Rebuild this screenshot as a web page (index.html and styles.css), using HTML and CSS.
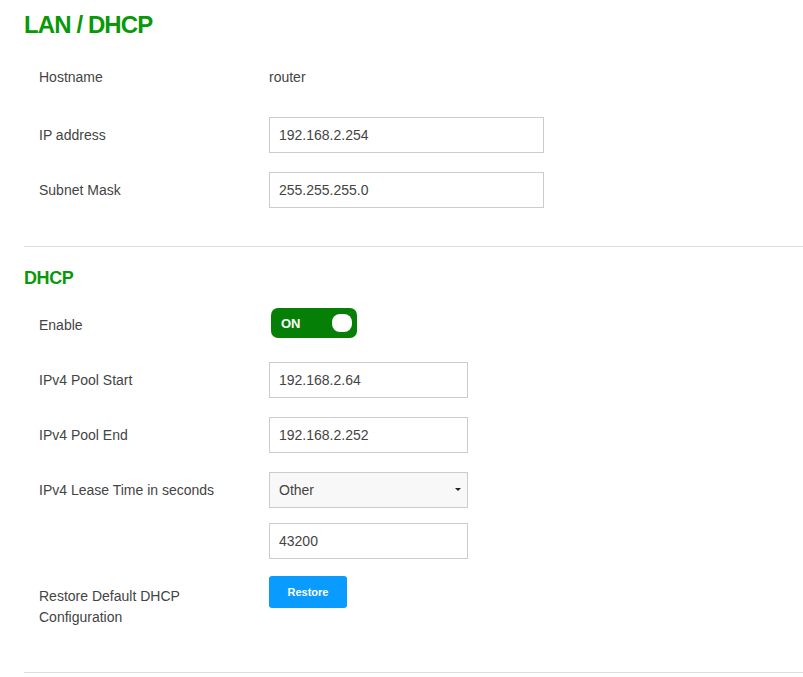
FILE: index.html
```html
<!DOCTYPE html>
<html lang="en">
<head>
  <meta charset="UTF-8">
  <meta name="viewport" content="width=device-width, initial-scale=1.0">
  <link rel="stylesheet" href="styles.css">
</head>
<body>

<div class="page">
  <h1 class="title">LAN / DHCP</h1>

  <div class="row row-host">
    <div class="label">Hostname</div>
    <div class="value">router</div>
  </div>
  <div class="row">
    <div class="label">IP address</div>
    <input class="field wide" type="text" value="192.168.2.254">
  </div>
  <div class="row">
    <div class="label">Subnet Mask</div>
    <input class="field wide" type="text" value="255.255.255.0">
  </div>

  <hr class="sep sep-top">

  <h2 class="subtitle">DHCP</h2>

  <div class="row">
    <div class="label">Enable</div>
    <div class="toggle">
      <span class="toggle-text">ON</span>
      <span class="knob"></span>
    </div>
  </div>
  <div class="row">
    <div class="label">IPv4 Pool Start</div>
    <input class="field" type="text" value="192.168.2.64">
  </div>
  <div class="row">
    <div class="label">IPv4 Pool End</div>
    <input class="field" type="text" value="192.168.2.252">
  </div>
  <div class="row row-tight">
    <div class="label">IPv4 Lease Time in seconds</div>
    <div class="select-wrap">
      <select class="field select">
        <option>Other</option>
      </select>
    </div>
  </div>
  <div class="row row-extra">
    <div class="label"></div>
    <input class="field" type="text" value="43200">
  </div>
  <div class="row row-restore">
    <div class="label label-multi">Restore Default DHCP Configuration</div>
    <button class="btn">Restore</button>
  </div>

  <hr class="sep sep-bottom">
</div>

</body>
</html>
```

FILE: styles.css
```css
body {
  margin: 0;
  font-family: "Liberation Sans", Arial, sans-serif;
  color: #444;
  background: #fff;
}

.page {
  padding-left: 24px;
}

.title {
  margin: 10px 0 20px;
  font-size: 24px;
  line-height: 29px;
  letter-spacing: -0.9px;
  font-weight: bold;
  color: #079907;
}

.subtitle {
  margin: 21px 0 18px;
  font-size: 18px;
  line-height: 21px;
  letter-spacing: -0.4px;
  font-weight: bold;
  color: #079907;
}

.row {
  display: flex;
  align-items: center;
  min-height: 36px;
  margin-bottom: 19px;
}

.row-host {
  margin-bottom: 22px;
}

.row-tight {
  margin-bottom: 15px;
}

.row-extra {
  margin-bottom: 17px;
}

.row-restore {
  align-items: flex-start;
  margin-bottom: 0;
}

.label {
  padding-left: 15px;
  padding-right: 20px;
  box-sizing: border-box;
  flex: 0 0 245px;
  font-size: 14px;
  line-height: 21px;
  color: #444;
}

.label-multi {
  padding-top: 10px;
}

.value {
  font-size: 14px;
  color: #444;
}

.field {
  box-sizing: border-box;
  width: 199px;
  height: 36px;
  padding: 0 9px;
  border: 1px solid #ccc;
  font-family: "Liberation Sans", Arial, sans-serif;
  font-size: 14px;
  color: #444;
  background: #fff;
  outline: none;
}

.field.wide {
  width: 275px;
}

.select-wrap {
  position: relative;
}

.select {
  -webkit-appearance: none;
  appearance: none;
  background: #f8f8f8;
  border-radius: 0;
}

.select-wrap::after {
  content: "";
  position: absolute;
  right: 7px;
  top: 16px;
  border-left: 3px solid transparent;
  border-right: 3px solid transparent;
  border-top: 3px solid #222;
}

.toggle {
  box-sizing: border-box;
  width: 86px;
  height: 30px;
  margin-left: 2px;
  margin-top: -4px;
  padding: 0 5px 0 10px;
  border-radius: 7px;
  background: #067f06;
  display: flex;
  align-items: center;
  justify-content: space-between;
}

.toggle-text {
  color: #fff;
  font-size: 13px;
  font-weight: bold;
}

.knob {
  width: 20px;
  height: 18px;
  border-radius: 8px;
  background: #fff;
}

.btn {
  width: 78px;
  height: 32px;
  border: none;
  border-radius: 3px;
  background: #0a9bff;
  color: #fff;
  font-family: "Liberation Sans", Arial, sans-serif;
  font-size: 11px;
  font-weight: bold;
  cursor: pointer;
}

.sep {
  border: none;
  border-top: 1px solid #ddd;
  margin: 0;
}

.sep-top {
  margin-top: 38px;
}

.sep-bottom {
  margin-top: 44px;
}
```
